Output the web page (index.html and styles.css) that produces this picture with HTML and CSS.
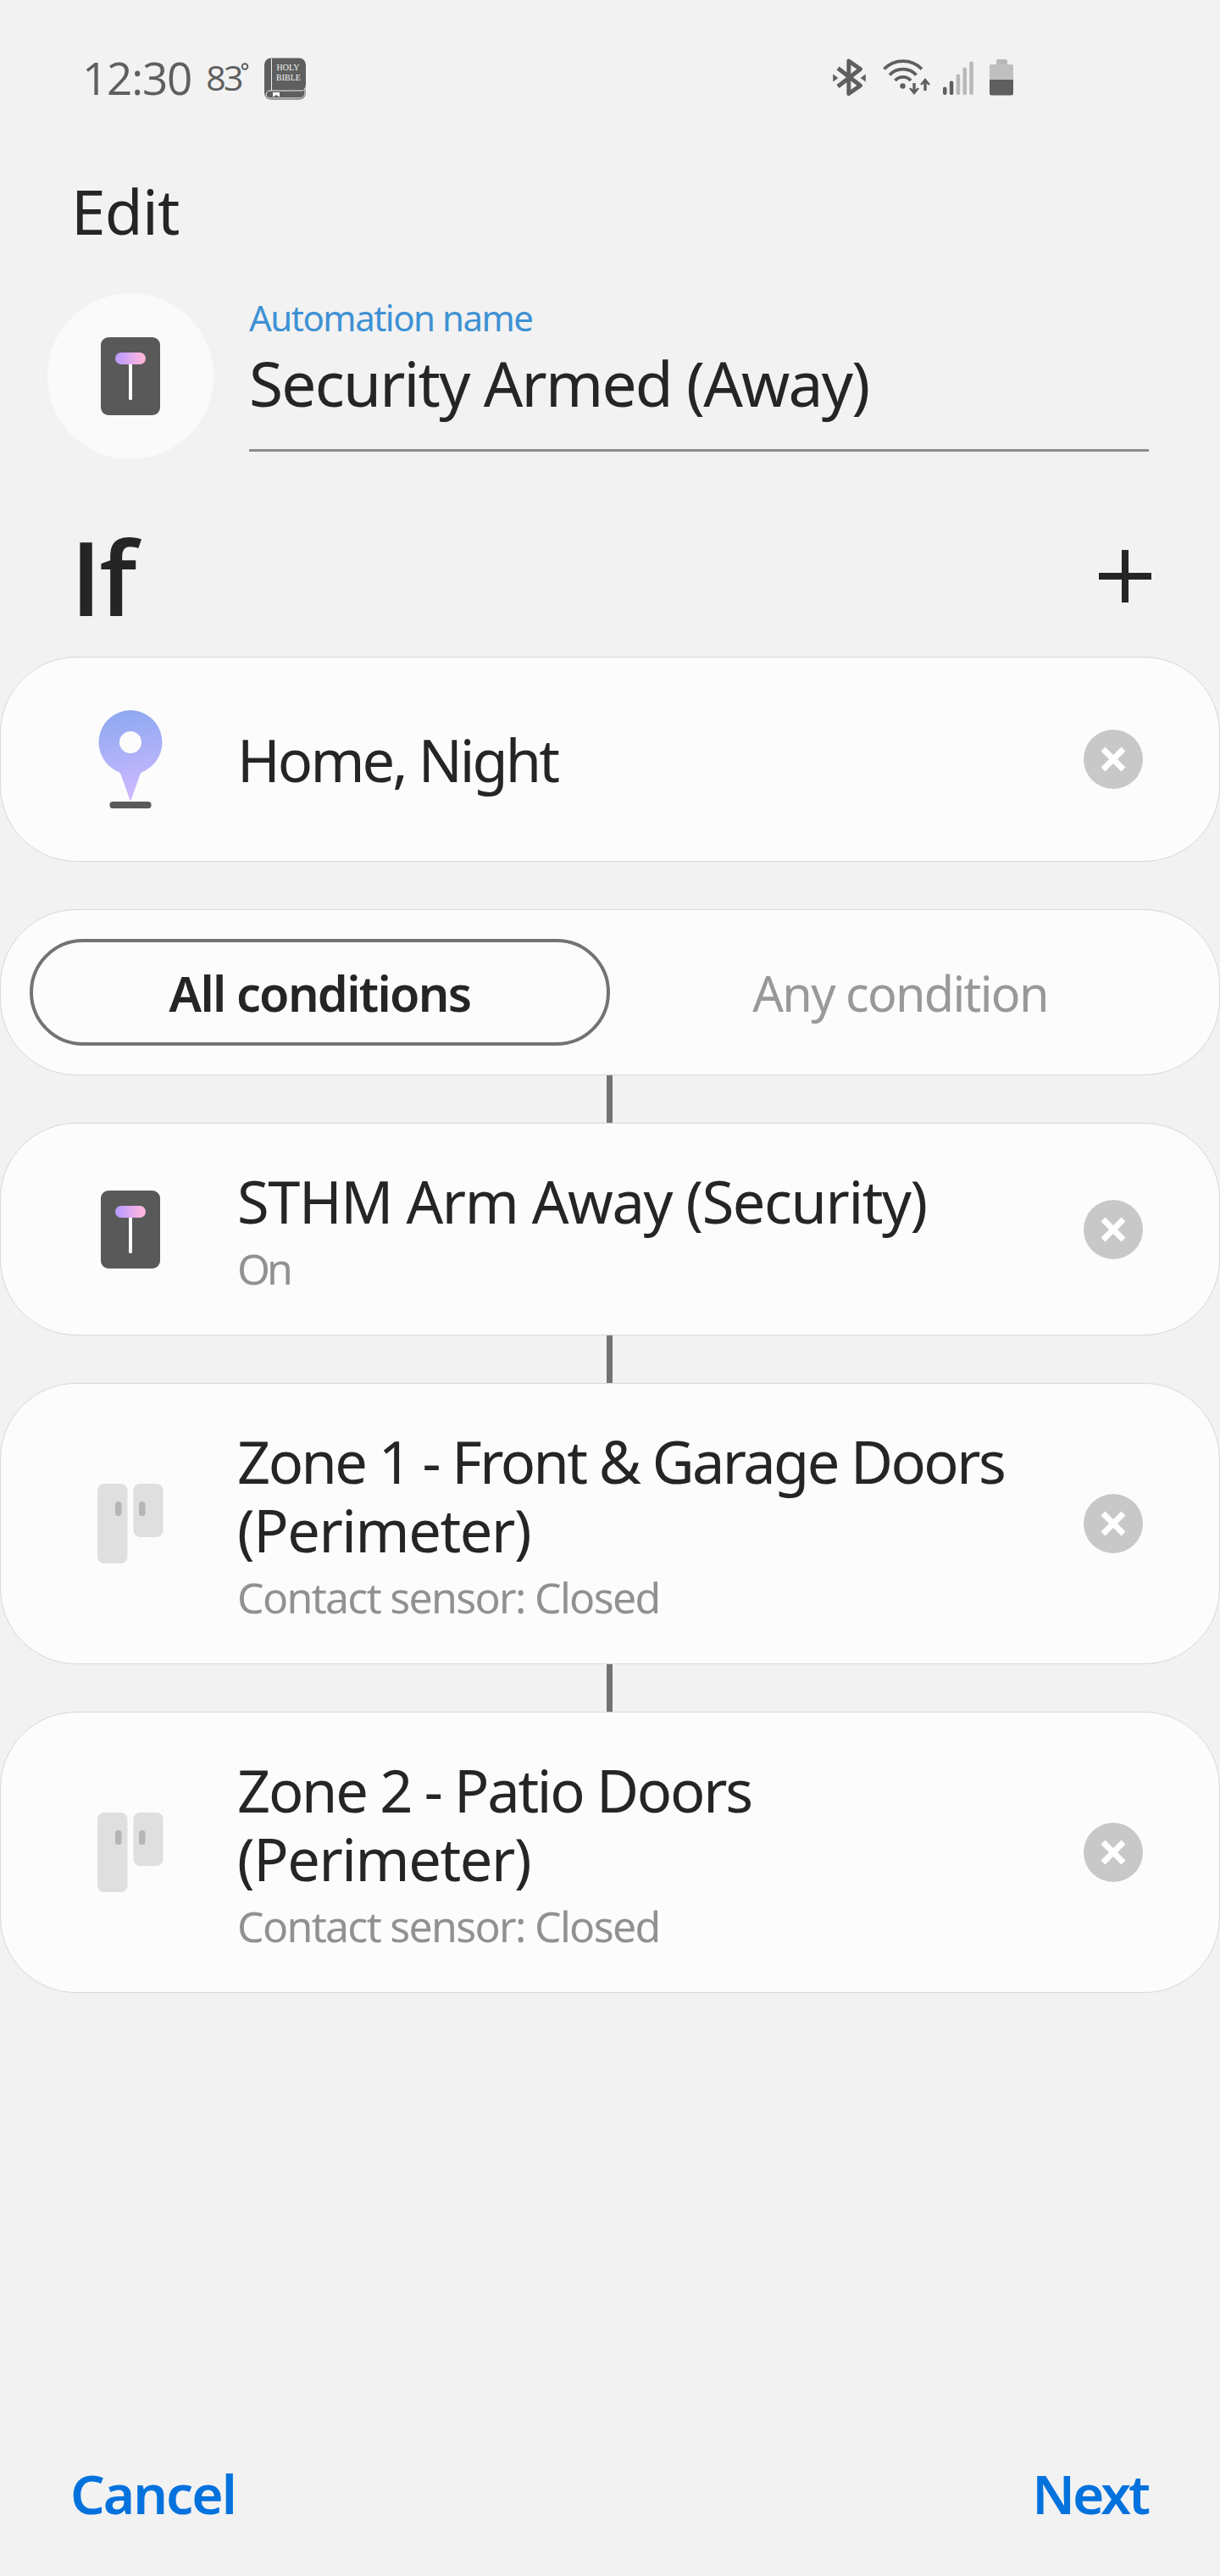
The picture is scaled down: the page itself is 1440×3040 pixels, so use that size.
FILE: index.html
```
<!DOCTYPE html>
<html lang="en">

<head>
	<meta charset="UTF-8">
	<title>Edit automation</title>
	<link rel="stylesheet" href="styles.css">
</head>

<body>
	<div class="status-bar">
		<span class="time">12:30</span>
		<span class="temp">83</span>
		<svg class="degree" width="10" height="34" viewBox="0 0 10 34"><circle cx="5" cy="4.500" r="3.300" /></svg>
		<svg class="bible" width="50" height="50" viewBox="0 0 50 50">
			<rect x="0" y="0.500" width="49" height="49" rx="8" fill="#5f5f5f" />
			<path d="M8.500 1V38.500" stroke="#f2f2f2" stroke-width="1" />
			<path d="M49 33C49 37 47 39 43 39H6.500a4.300 4.300 0 0 0 0 8.800H41C46 47.800 48 45 48 40V36" fill="none" stroke="#f2f2f2" stroke-width="1" />
			<path d="M10 41h8v5.500l-4-2.500-4 2.500z" fill="#fff" />
			<text x="28" y="15" text-anchor="middle">HOLY</text>
			<text x="28.500" y="26.500" text-anchor="middle">BIBLE</text>
		</svg>
		<svg class="bluetooth" width="40" height="46" viewBox="0 0 40 46">
			<path d="M6 12.500L32.500 33 18.800 42.500V4L32.500 13.500 6 34" fill="none" stroke="#5f5f5f" stroke-width="4.900" stroke-linejoin="round" />
			<path d="M0.200 19.500v9l6.200-4.500zM38.800 19.500v9l-6.200-4.500z" fill="#5f5f5f" />
		</svg>
		<svg class="wifi" width="57" height="46" viewBox="0 0 57 46">
			<g fill="none" stroke="#5f5f5f" stroke-width="3.800">
				<path d="M1.500 13.500A31 31 0 0 1 46 13.500" />
				<path d="M8 20.500A21.500 21.500 0 0 1 39.500 20.500" />
				<path d="M14.500 27A12.500 12.500 0 0 1 33 27" />
				<path d="M37 30V41M50 39V29" stroke-width="3.400" />
			</g>
			<circle cx="23.500" cy="33.500" r="3.200" fill="#5f5f5f" />
			<path d="M31 36.500l6 7.500 6-7.500-2-1-4 3.500-4-3.500zM44 31.500l6-7.500 6 7.500-2 1-4-3.500-4 3.500z" fill="#5f5f5f" />
		</svg>
		<svg class="signal" width="37" height="46" viewBox="0 0 37 46">
			<g fill="#5f5f5f">
				<rect x="0" y="34.500" width="4.500" height="9.500" rx="2" />
				<rect x="7.800" y="27.500" width="4.500" height="16.500" rx="2" />
			</g>
			<g fill="#b8b8b8">
				<rect x="15.700" y="19.500" width="4.500" height="24.500" rx="2" />
				<rect x="23.500" y="11.500" width="4.500" height="32.500" rx="2" />
				<rect x="31.300" y="4.500" width="4.500" height="39.500" rx="2" />
			</g>
		</svg>
		<svg class="battery" width="28" height="46" viewBox="0 0 28 46">
			<path d="M8 8V4a2 2 0 0 1 2-2h9a2 2 0 0 1 2 2v4z" fill="#b8b8b8" />
			<path d="M0 26V10a2 2 0 0 1 2-2h24a2 2 0 0 1 2 2v16z" fill="#bfbfbf" />
			<path d="M0 26h28v16a2.500 2.500 0 0 1-2.500 2.500h-23A2.500 2.500 0 0 1 0 42z" fill="#5f5f5f" />
		</svg>
	</div>

	<h1 class="title">Edit</h1>

	<div class="name-row">
		<div class="name-icon">
			<svg width="70" height="92" viewBox="0 0 70 92">
				<defs>
					<linearGradient id="knob">
						<stop offset="0.1" stop-color="#bd9dff" />
						<stop offset="0.9" stop-color="#ffb6de" />
					</linearGradient>
				</defs>
				<rect width="70" height="92" rx="9" fill="#595959" />
				<rect x="33" y="28" width="4" height="46" rx="1.500" fill="#fff" />
				<rect x="17" y="18" width="36" height="14" rx="7" fill="url(#knob)" />
			</svg>
		</div>
		<div class="name-field">
			<div class="name-label">Automation name</div>
			<div class="name-value">Security Armed (Away)</div>
		</div>
	</div>

	<div class="section-header">
		<h2>If</h2>
		<svg width="62" height="62" viewBox="0 0 62 62"><path d="M31 0V62M0 31H62" stroke="#252525" stroke-width="8" /></svg>
	</div>

	<main>
		<div class="card card-mode">
			<div class="icon">
				<svg width="76" height="116" viewBox="0 0 76 116">
					<defs>
						<linearGradient id="pin" x1="0" y1="0" x2="0.100" y2="1">
							<stop offset="0" stop-color="#8aa8f0" />
							<stop offset="1" stop-color="#cdb9ff" />
						</linearGradient>
					</defs>
					<path d="M38 0A38 38 0 0 1 51 73.500Q49.500 75 49 77L38 108 27 77Q26.500 75 25 73.500A38 38 0 0 1 38 0zM38 25a13 13 0 1 0 0 26 13 13 0 0 0 0-26z" fill="url(#pin)" fill-rule="evenodd" />
					<rect x="13.500" y="108" width="49" height="8" rx="3.500" fill="#5a5a5a" />
				</svg>
			</div>
			<div class="text">
				<div class="name home">Home, Night</div>
			</div>
			<svg class="remove" width="70" height="70" viewBox="0 0 70 70"><circle cx="35" cy="35" r="35" /><path d="M23 23L47 47M47 23L23 47" /></svg>
		</div>

		<div class="toggle">
			<div class="option selected">All conditions</div>
			<div class="option">Any condition</div>
		</div>

		<div class="card card-switch linked">
			<div class="icon">
				<svg width="70" height="92" viewBox="0 0 70 92">
					<rect width="70" height="92" rx="9" fill="#595959" />
					<rect x="33" y="28" width="4" height="46" rx="1.500" fill="#fff" />
					<rect x="17" y="18" width="36" height="14" rx="7" fill="url(#knob)" />
				</svg>
			</div>
			<div class="text">
				<div class="name">STHM Arm Away (Security)</div>
				<div class="state on">On</div>
			</div>
			<svg class="remove" width="70" height="70" viewBox="0 0 70 70"><circle cx="35" cy="35" r="35" /><path d="M23 23L47 47M47 23L23 47" /></svg>
		</div>

		<div class="card card-sensor linked">
			<div class="icon">
				<svg width="78" height="94" viewBox="0 0 78 94">
					<rect x="0" y="0" width="35.500" height="94" rx="8" fill="#dfdfdf" />
					<rect x="42.500" y="0" width="35" height="63" rx="8" fill="#dfdfdf" />
					<rect x="21" y="21" width="7.500" height="17" rx="3.500" fill="#b5b5b5" />
					<rect x="49" y="21" width="7.500" height="17" rx="3.500" fill="#b5b5b5" />
				</svg>
			</div>
			<div class="text">
				<div class="name zone">Zone 1 - Front &amp; Garage Doors</div>
				<div class="name">(Perimeter)</div>
				<div class="state">Contact sensor: Closed</div>
			</div>
			<svg class="remove" width="70" height="70" viewBox="0 0 70 70"><circle cx="35" cy="35" r="35" /><path d="M23 23L47 47M47 23L23 47" /></svg>
		</div>

		<div class="card card-sensor linked">
			<div class="icon">
				<svg width="78" height="94" viewBox="0 0 78 94">
					<rect x="0" y="0" width="35.500" height="94" rx="8" fill="#dfdfdf" />
					<rect x="42.500" y="0" width="35" height="63" rx="8" fill="#dfdfdf" />
					<rect x="21" y="21" width="7.500" height="17" rx="3.500" fill="#b5b5b5" />
					<rect x="49" y="21" width="7.500" height="17" rx="3.500" fill="#b5b5b5" />
				</svg>
			</div>
			<div class="text">
				<div class="name patio">Zone 2 - Patio Doors</div>
				<div class="name">(Perimeter)</div>
				<div class="state">Contact sensor: Closed</div>
			</div>
			<svg class="remove" width="70" height="70" viewBox="0 0 70 70"><circle cx="35" cy="35" r="35" /><path d="M23 23L47 47M47 23L23 47" /></svg>
		</div>
	</main>

	<footer>
		<span class="cancel">Cancel</span>
		<span class="next">Next</span>
	</footer>
</body>

</html>
```
FILE: styles.css
```
*:root {
	--background: #f2f2f2;
	--card: #fcfcfc;
	--text: #252525;
	--muted: #919191;
	--line: #737373;
	--status: #5f5f5f;
	background-color: var(--background);
}

* {
	padding: 0;
	margin: 0;
	box-sizing: border-box;
}

body {
	display: flex;
	flex-flow: column nowrap;
	height: 3040px;
	font-family: "Noto Sans", "Open Sans", sans-serif;
	color: var(--text);
}

.status-bar {
	flex: 0 0 182px;
	display: flex;
	align-items: center;
	padding: 0 244px 0 97px;
	font-family: "Open Sans", sans-serif;
	color: var(--status);
}

.time {
	font-size: 53px;
	letter-spacing: -1.200px;
}

.temp {
	font-size: 41px;
	letter-spacing: -2.500px;
	margin-left: 17px;
}

.degree {
	margin-left: -1px;
}

.degree circle {
	fill: none;
	stroke: var(--status);
	stroke-width: 2;
}

.bible {
	margin: 3px 0 0 18px;
}

.bible text {
	fill: #f2f2f2;
	font: 10px "Liberation Serif", serif;
}

.bluetooth {
	margin-left: auto;
}

.wifi {
	margin-left: 19px;
}

.signal {
	margin-left: 14px;
}

.battery {
	margin-left: 18px;
}

.title {
	font-size: 73px;
	font-weight: 400;
	line-height: 100px;
	letter-spacing: -0.800px;
	margin: 17px 0 0 84px;
}

.name-row {
	display: flex;
	align-items: flex-start;
	gap: 42px;
	margin: 47px 84px 0 56px;
}

.name-icon {
	flex: 0 0 196px;
	height: 196px;
	border-radius: 50%;
	background-color: #fafafa;
	display: flex;
	align-items: center;
	justify-content: center;
}

.name-field {
	flex: 1;
	height: 187px;
	padding-top: 4px;
	border-bottom: 3px solid #8c8c8c;
}

.name-label {
	font-size: 42px;
	line-height: 50px;
	letter-spacing: -1.500px;
	color: #3e91d4;
}

.name-value {
	font-size: 73px;
	line-height: 90px;
	letter-spacing: -1.800px;
	margin-top: 7px;
}

.section-header {
	display: flex;
	align-items: center;
	justify-content: space-between;
	height: 140px;
	margin: 68px 81px 25px 83px;
}

.section-header h2 {
	font-family: "Open Sans", sans-serif;
	font-size: 122px;
	font-weight: 600;
	line-height: 140px;
	letter-spacing: -3px;
}

main {
	display: flex;
	flex-flow: column nowrap;
	gap: 56px;
}

.card,
.toggle {
	display: flex;
	align-items: center;
	background-color: var(--card);
	border: 1px solid #d8d8d8;
	border-radius: 90px;
}

.card {
	position: relative;
	padding: 0 90px 0 113px;
}

.card-mode {
	height: 242px;
}

.card-switch {
	height: 251px;
}

.card-sensor {
	height: 332px;
}

/* line that joins a card to the one above */
.linked::before {
	content: "";
	position: absolute;
	width: 7px;
	height: 56px;
	left: 715px;
	top: -57px;
	background-color: var(--line);
}

.icon {
	flex: 0 0 80px;
	display: flex;
	justify-content: center;
}

.text {
	flex: 1;
	margin-left: 86px;
}

.name {
	font-size: 68.500px;
	line-height: 81px;
	letter-spacing: -1.400px;
}

.home {
	letter-spacing: -2.900px;
}

.zone {
	letter-spacing: -2.550px;
}

.patio {
	letter-spacing: -2.250px;
}

.state {
	font-size: 50px;
	line-height: 54px;
	letter-spacing: -1.700px;
	margin-top: 12px;
	color: var(--muted);
}

.on {
	letter-spacing: -4px;
}

.remove circle {
	fill: #c8c8c8;
}

.remove path {
	stroke: #fff;
	stroke-width: 7;
}

.toggle {
	height: 196px;
	padding: 0 34px;
}

.option {
	flex: 1;
	height: 126px;
	line-height: 120px;
	border: 4px solid transparent;
	border-radius: 63px;
	font-size: 57.500px;
	letter-spacing: -1.700px;
	text-align: center;
	color: #999;
}

.selected {
	border-color: var(--line);
	font-weight: 600;
	color: var(--text);
}

footer {
	display: flex;
	justify-content: space-between;
	margin-top: auto;
	padding: 0 85px 57px 83px;
	font-size: 64px;
	font-weight: 600;
	line-height: 80px;
	color: #0372dd;
}

.cancel {
	letter-spacing: -2px;
}

.next {
	letter-spacing: -3px;
}
```
